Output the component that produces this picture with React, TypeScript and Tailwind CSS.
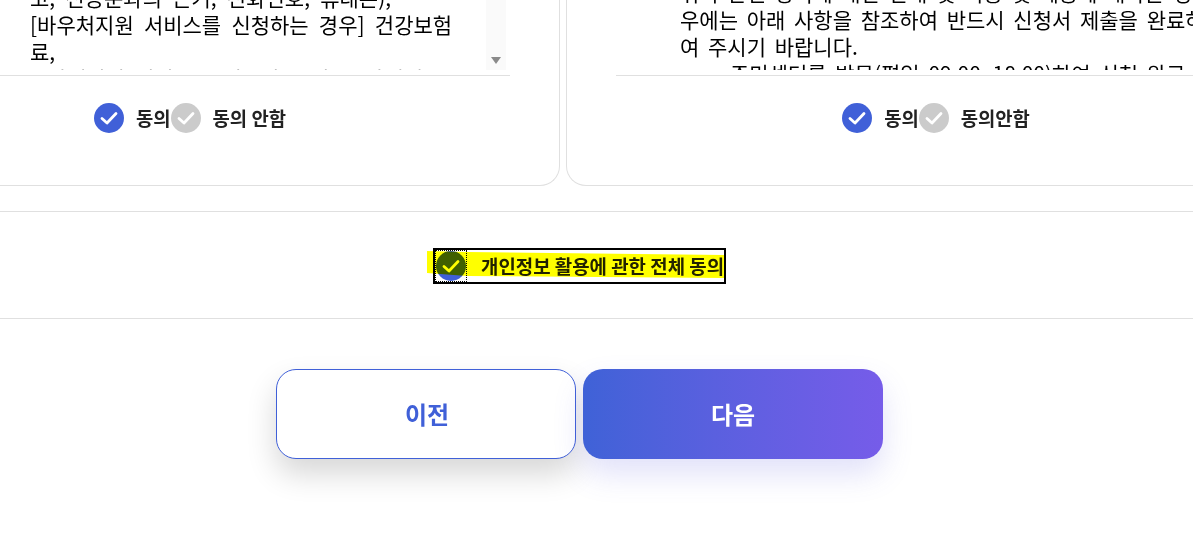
const BODY_FONT = "font-['Noto_Sans_CJK_KR','Liberation_Sans',sans-serif]";

function Check({ on }: { on: boolean }) {
  return (
    <span className={`flex h-[30px] w-[30px] shrink-0 items-center justify-center rounded-full ${on ? "bg-[#4060d8]" : "bg-[#cbcbcb]"}`}>
      <svg width="20" height="20" viewBox="0 0 20 20" fill="none">
        <path d="M3 10.5 L8 15 L17 5.5" stroke="white" strokeWidth="2.8" strokeLinecap="round" strokeLinejoin="round" />
      </svg>
    </span>
  );
}

function AgreeRow({ no }: { no: string }) {
  return (
    <div className="flex h-[110px] justify-center pt-[27px] text-[18.8px] font-semibold text-[#222]">
      <div className="flex h-[30px] items-center gap-3">
        <Check on />
        <span>동의</span>
      </div>
      <div className="flex h-[30px] items-center gap-3">
        <Check on={false} />
        <span>{no}</span>
      </div>
    </div>
  );
}

export default function App() {
  return (
    <div className={`h-[547px] w-[1193px] overflow-hidden bg-white text-black ${BODY_FONT}`}>
      <div className="-ml-[180px] -mt-[40px] flex w-[1486px] gap-[6px]">
        <div className="h-[226px] w-[740px] shrink-0 rounded-b-[20px] border border-t-0 border-[#e0e0e0] px-[49px]">
          <div className="flex h-[115px]">
            <div className="h-[110px] flex-1 overflow-hidden whitespace-nowrap pl-[160px] pt-[24px] text-[21px] leading-[27px] [word-spacing:5.5px]">
              <p>고, 전공분과의 근거, 전화번호, 휴대폰),</p>
              <p>[바우처지원 서비스를 신청하는 경우] 건강보험</p>
              <p>료,</p>
              <p>- 판매회원 서비스를 신청하는 경우, 판매대금</p>
            </div>
            <div className="mr-[4px] flex h-[110px] w-[20px] items-end justify-center bg-[#fafafa] pb-[6px]">
              <span className="h-0 w-0 border-x-[5px] border-t-[7px] border-x-transparent border-t-[#8a8a8a]" />
            </div>
          </div>
          <div className="border-t border-[#e0e0e0]">
            <AgreeRow no="동의 안함" />
          </div>
        </div>
        <div className="h-[226px] w-[740px] shrink-0 rounded-b-[20px] border border-t-0 border-[#e0e0e0] px-[49px]">
          <div className="h-[115px]">
            <div className="h-[110px] overflow-hidden whitespace-nowrap pl-[64px] pt-[19px] text-[21px] leading-[27px] [word-spacing:4px]">
              <p>위의 관련 항목에 대한 안내 및 이용 및 제공에 대하는 경</p>
              <p>우에는 아래 사항을 참조하여 반드시 신청서 제출을 완료하</p>
              <p>여 주시기 바랍니다.</p>
              <p className="pl-[50px]">주민센터를 방문(평일 09:00~18:00)하여 신청 완료</p>
            </div>
          </div>
          <div className="border-t border-[#e0e0e0]">
            <AgreeRow no="동의안함" />
          </div>
        </div>
      </div>

      <div className="mt-[25px] flex h-[108px] items-center justify-center border-y border-[#e0e0e0] pr-[34px] pt-[2px]">
        <label className="relative flex h-[36px] w-[293px] items-center gap-[14px] border-2 border-black text-[18.9px] font-semibold text-[#222]">
          <span className="flex h-[32px] w-[32px] shrink-0 items-center justify-center border border-dotted border-black">
            <Check on />
          </span>
          <span className="whitespace-nowrap">개인정보 활용에 관한 전체 동의</span>
          <svg className="pointer-events-none absolute -left-[8px] -top-[2px] mix-blend-multiply" width="299" height="36" viewBox="0 0 299 36">
            <polygon points="0,3 40,4 298,7 298,30 40,28 0,25" fill="#ffff00" />
          </svg>
        </label>
      </div>

      <div className="flex justify-center gap-[7px] pr-[34px] pt-[50px]">
        <button className="h-[90px] w-[300px] rounded-[20px] border border-[#4060d8] bg-white pl-[2px] text-[24px] font-bold text-[#4060d8] shadow-[0_15px_30px_rgba(0,0,0,0.16)]">
          이전
        </button>
        <button className="h-[90px] w-[300px] rounded-[20px] bg-gradient-to-r from-[#3f62d7] to-[#765ce9] text-[24px] font-bold text-white shadow-[0_15px_30px_rgba(90,90,220,0.18)]">
          다음
        </button>
      </div>
    </div>
  );
}
